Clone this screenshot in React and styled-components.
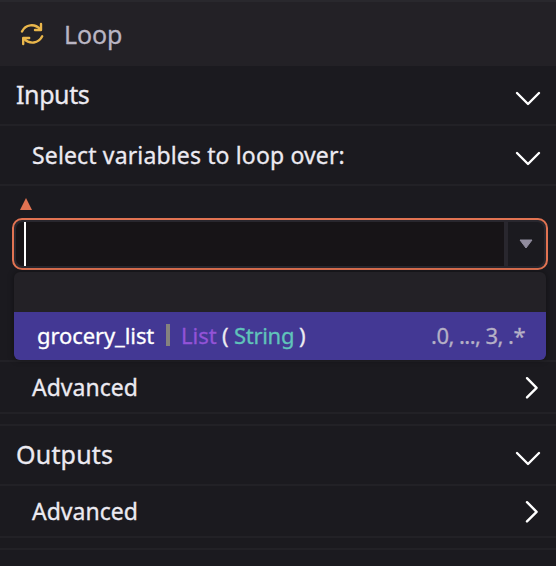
import React from "react";
import styled, { createGlobalStyle } from "styled-components";

const GlobalStyle = createGlobalStyle`
  * { box-sizing: border-box; }
  body { margin: 0; background: #1b1a1f; overflow: hidden; }
`;

const Panel = styled.main`
  width: 556px;
  height: 566px;
  background: #1b1a1f;
  color: #eceaf1;
  font-family: "Noto Sans", "Open Sans", sans-serif;
  overflow: hidden;
`;

const Header = styled.header`
  display: flex;
  align-items: center;
  gap: 20px;
  height: 66px;
  padding: 0 20px;
  border-top: 2px solid #29282d;
  background: #232126;
  color: #b9b5c3;
`;

const Label = styled.span`
  font-size: ${(p) => p.$size}px;
  letter-spacing: ${(p) => p.$spacing || 0}px;
  line-height: 32px;
  white-space: pre;
  -webkit-text-stroke: 0.3px currentColor;
`;

const Row = styled.div`
  display: flex;
  align-items: center;
  justify-content: space-between;
  height: ${(p) => p.$height}px;
  padding: 0 15px 0 ${(p) => p.$indent}px;
  border-bottom: 2px solid #222126;
`;

const Title = styled(Label)`
  margin-bottom: ${(p) => p.$lift || 0}px;
`;

const Gap = styled.div`
  height: 12px;
  border-bottom: 2px solid #222126;
`;

const Field = styled.section`
  height: 176px;
  padding: 12px 8px 0 12px;
  border-bottom: 2px solid #222126;
`;

const Warning = styled.svg`
  display: block;
  width: 12px;
  height: 12px;
  margin: 0 0 8px 8px;
`;

const Combo = styled.div`
  position: relative;
  display: flex;
  width: 536px;
  height: 52px;
  padding: 2px;
  border: 2px solid #e27352;
  border-radius: 10px;
  background: #29272e;
`;

const Input = styled.div`
  display: flex;
  flex: 1;
  padding-left: 8px;
  border-radius: 7px 0 0 7px;
  background: #171417;
`;

const Caret = styled.div`
  width: 2px;
  background: #fff;
`;

const Toggle = styled.div`
  display: flex;
  justify-content: center;
  width: 36px;
  margin-left: 4px;
  padding-top: 17px;
  border-radius: 0 7px 7px 0;
  background: #1b1a1f;
`;

const Menu = styled.div`
  position: absolute;
  z-index: 1;
  top: 52px;
  left: 0;
  width: 532px;
  height: 88px;
  padding-top: 40px;
  border-radius: 6px;
  overflow: hidden;
  background: #232126;
  box-shadow: 0 0 6px #0006;
`;

const Option = styled.div`
  display: flex;
  align-items: center;
  height: 48px;
  padding: 0 21px 3px 23px;
  background: #433894;
`;

const Name = styled(Label)`
  width: 129px;
  color: #fff;
`;

const Separator = styled.span`
  width: 4px;
  height: 22px;
  margin: 0 11px 0 0;
  background: #85827f;
`;

const Type = styled(Label)`
  width: ${(p) => p.$width}px;
  color: ${(p) => p.$color};
`;

const Paths = styled(Label)`
  margin-left: auto;
  color: #b5b0c6;
`;

const Chevron = styled.svg`
  width: ${(p) => (p.$open ? 26 : 14)}px;
  height: ${(p) => (p.$open ? 16 : 24)}px;
  margin-top: ${(p) => (p.$open ? 7 : 2)}px;
  margin-right: ${(p) => (p.$open ? 0 : 2)}px;
  fill: none;
  stroke: #fff;
  stroke-width: 2.4;
  stroke-linecap: round;
  stroke-linejoin: round;
`;

const Arrow = ({ open }) => (
  <Chevron $open={open} viewBox={open ? "0 0 26 16" : "0 0 14 24"}>
    <path d={open ? "M2 2L13 13L24 2" : "M2 2.2L11.6 11.8L2 21.4"} />
  </Chevron>
);

const Section = ({ title, height = 60, indent = 16, size = 25, spacing, lift, open }) => (
  <Row $height={height} $indent={indent}>
    <Title $size={size} $spacing={spacing} $lift={lift}>{title}</Title>
    <Arrow open={open} />
  </Row>
);

const LoopIcon = () => (
  <svg width="24" height="24" viewBox="0 0 24 24" fill="none" stroke="#e9b64b" strokeWidth="2.4" strokeLinecap="round" strokeLinejoin="round">
    <path d="M2 9.5C5.5 2.3 14.5 1 20.3 7.2" />
    <path d="M21 2V8H15" />
    <path d="M22.2 14.3C18.7 21.5 9.7 22.8 3.9 16.6" />
    <path d="M3.2 22V16H9.2" />
  </svg>
);

export default function App() {
  return (
    <>
      <GlobalStyle />
      <Panel>
        <Header>
          <LoopIcon />
          <Label $size={25} $spacing={-0.1}>Loop</Label>
        </Header>
        <Section title="Inputs" spacing={-0.4} lift={2} open />
        <Section title="Select variables to loop over:" indent={32} size={23} spacing={0.14} open />
        <Field>
          <Warning viewBox="0 0 12 12"><path d="M6 0L12 12H0Z" fill="#e27352" /></Warning>
          <Combo>
            <Input><Caret /></Input>
            <Toggle>
              <svg width="14" height="10" viewBox="0 0 14 10">
                <path d="M1 1H13L7 9Z" fill="#918c9e" stroke="#918c9e" strokeLinejoin="round" />
              </svg>
            </Toggle>
            <Menu>
              <Option>
                <Name $size={22} $spacing={-0.1}>grocery_list</Name>
                <Separator />
                <Type $size={22} $width={41} $color="#9353d8">List</Type>
                <Type $size={22} $width={12} $color="#eceaf1">(</Type>
                <Type $size={22} $width={65} $spacing={-0.3} $color="#60c4ba">String</Type>
                <Type $size={22} $width={12} $color="#eceaf1">)</Type>
                <Paths $size={22} $spacing={-0.55}>.0, ..., 3, .*</Paths>
              </Option>
            </Menu>
          </Combo>
        </Field>
        <Section title="Advanced" height={52} indent={32} size={23} />
        <Gap />
        <Section title="Outputs" spacing={0.2} lift={2} open />
        <Section title="Advanced" height={52} indent={32} size={23} />
        <Gap />
      </Panel>
    </>
  );
}
